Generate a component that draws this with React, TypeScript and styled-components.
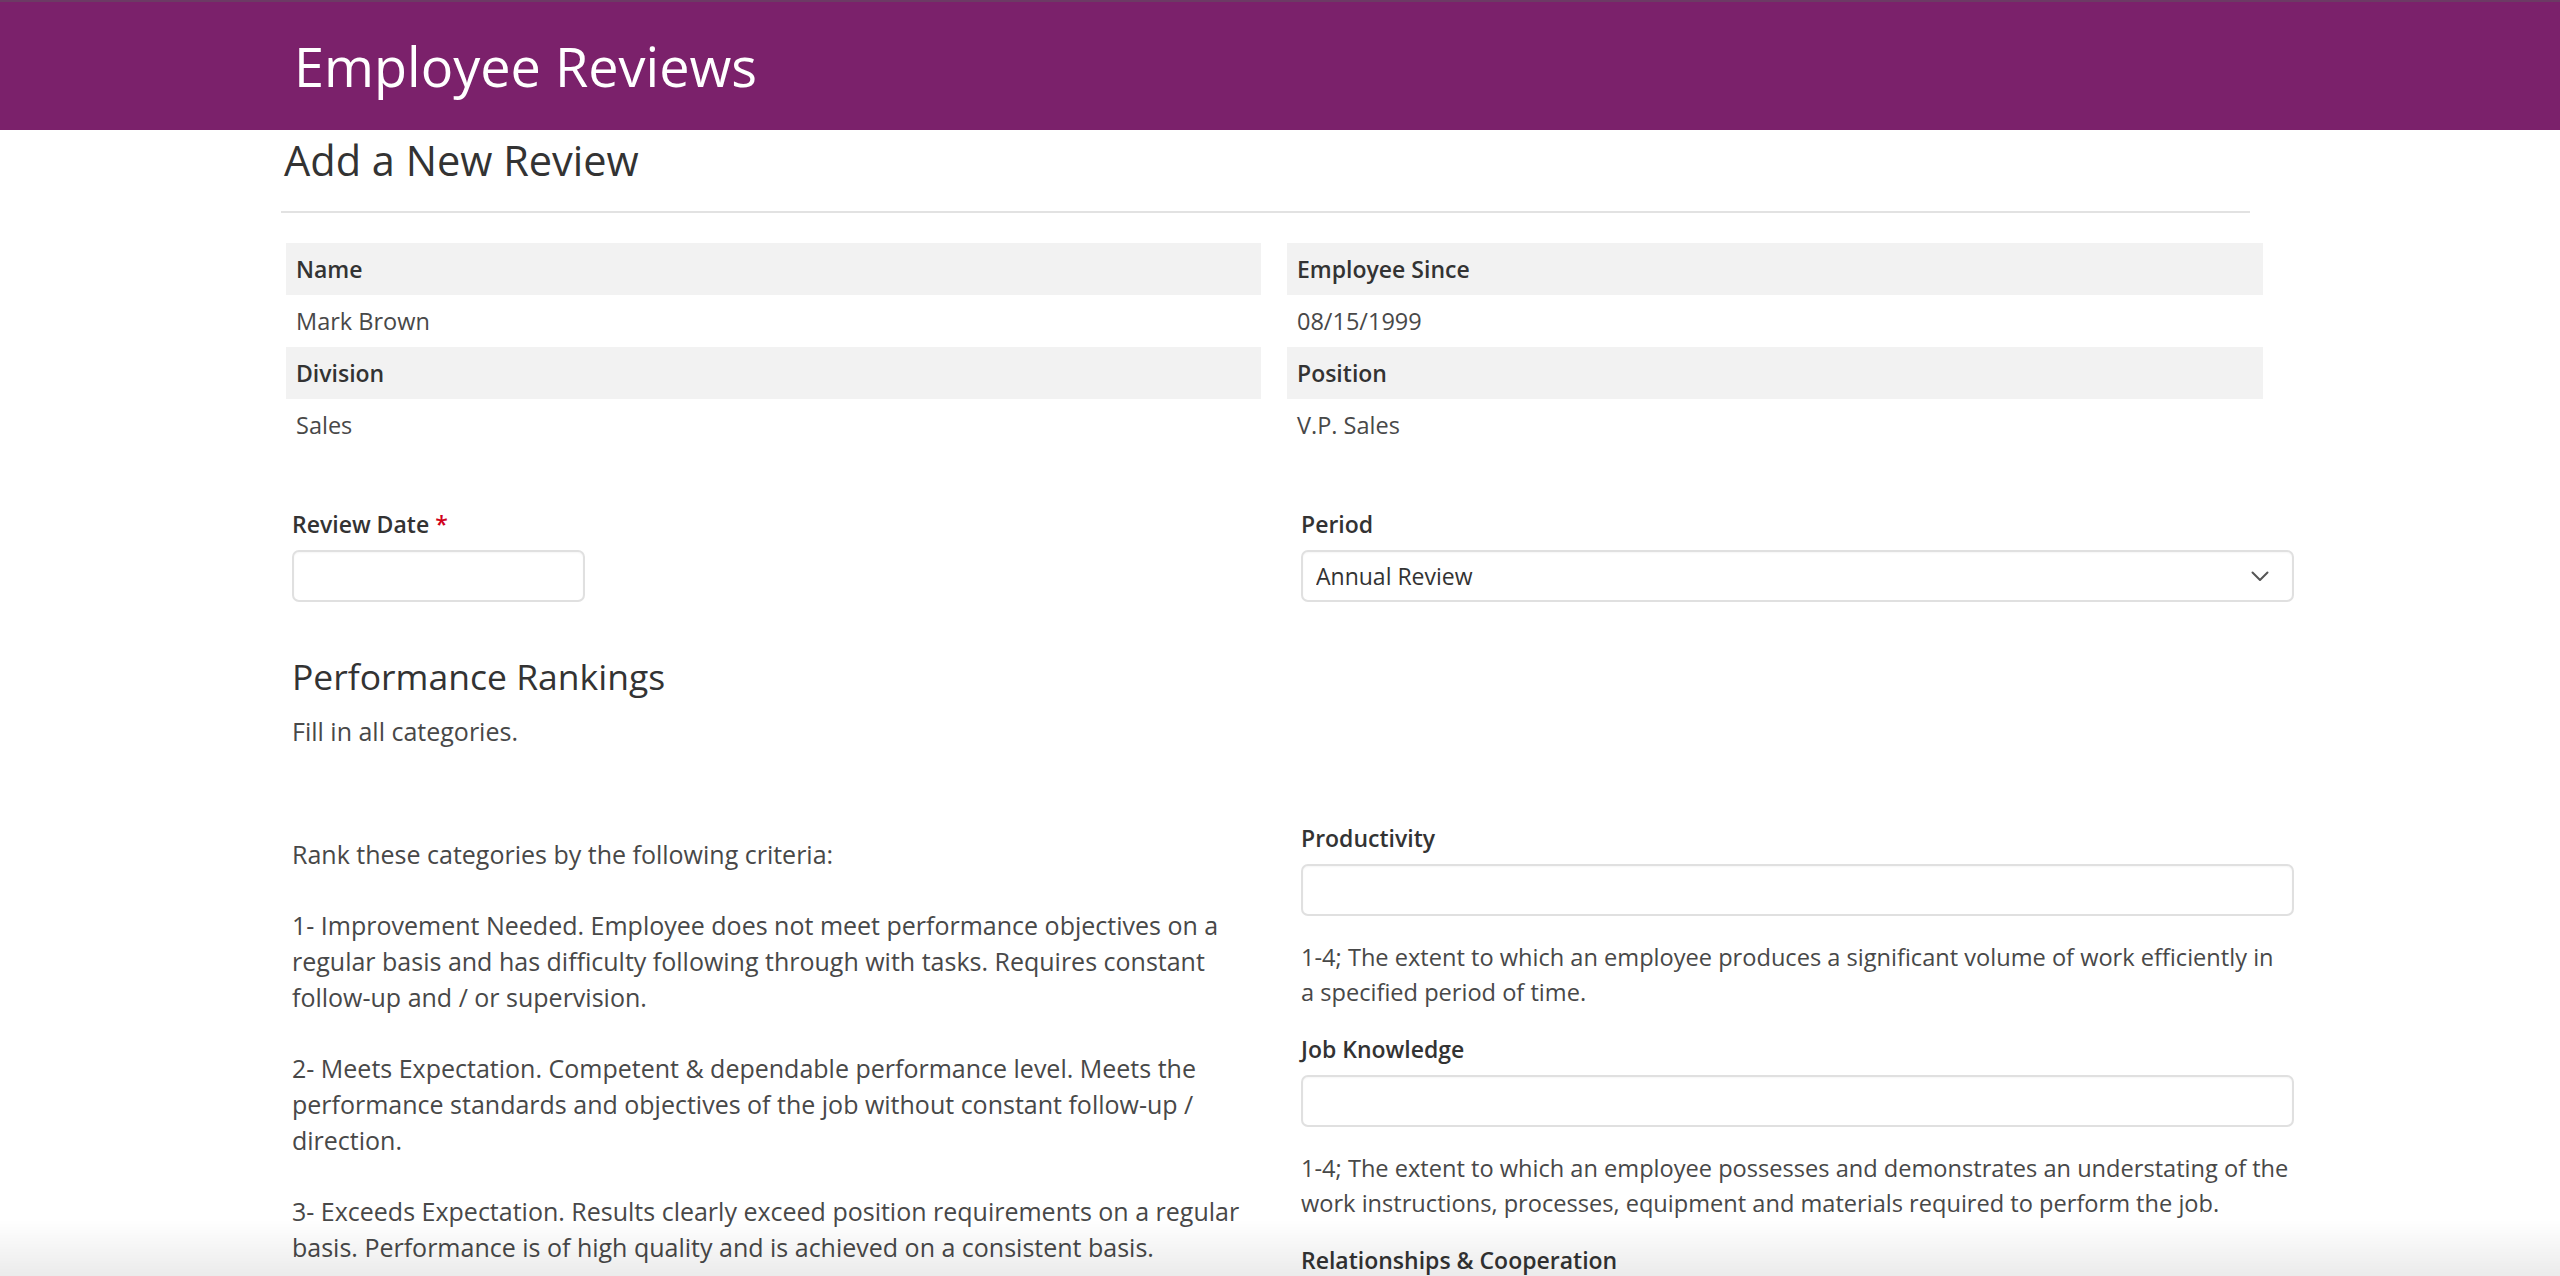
import styled, { createGlobalStyle } from "styled-components";

const GlobalStyle = createGlobalStyle`
  html, body {
    margin: 0;
    padding: 0;
    background: #ffffff;
    font-family: "Open Sans", "Noto Sans", sans-serif;
    color: #333333;
  }
  * {
    box-sizing: border-box;
  }
`;

type InfoItem = {
  label: string;
  value: string;
};

type Category = {
  label: string;
  help: string;
};

const info: InfoItem[] = [
  { label: "Name", value: "Mark Brown" },
  { label: "Employee Since", value: "08/15/1999" },
  { label: "Division", value: "Sales" },
  { label: "Position", value: "V.P. Sales" },
];

const criteria = [
  "Rank these categories by the following criteria:",
  "1- Improvement Needed. Employee does not meet performance objectives on a regular basis and has difficulty following through with tasks. Requires constant follow-up and / or supervision.",
  "2- Meets Expectation. Competent & dependable performance level. Meets the performance standards and objectives of the job without constant follow-up / direction.",
  "3- Exceeds Expectation. Results clearly exceed position requirements on a regular basis. Performance is of high quality and is achieved on a consistent basis.",
  "4- Outstanding. Performance consistently and significantly exceeds position requirements and expectations.",
];

const categories: Category[] = [
  {
    label: "Productivity",
    help: "1-4; The extent to which an employee produces a significant volume of work efficiently in a specified period of time.",
  },
  {
    label: "Job Knowledge",
    help: "1-4; The extent to which an employee possesses and demonstrates an understating of the work instructions, processes, equipment and materials required to perform the job.",
  },
  {
    label: "Relationships & Cooperation",
    help: "1-4; The extent to which an employee develops and maintains good working relationships with co-workers and customers.",
  },
];

export default function App() {
  return (
    <>
      <GlobalStyle />
      <TopBar>
        <AppTitle>Employee Reviews</AppTitle>
      </TopBar>
      <Page>
        <PageTitle>Add a New Review</PageTitle>
        <Divider />

        <InfoGrid>
          {info.map((item) => (
            <InfoCell key={item.label}>
              <InfoLabel>{item.label}</InfoLabel>
              <InfoValue>{item.value}</InfoValue>
            </InfoCell>
          ))}
        </InfoGrid>

        <Form>
          <TwoCols>
            <Field>
              <Label>
                Review Date <Required>*</Required>
              </Label>
              <DateInput type="text" />
            </Field>
            <Field>
              <Label>Period</Label>
              <SelectBox>
                <Select defaultValue="annual">
                  <option value="annual">Annual Review</option>
                  <option value="mid">Mid-Year Review</option>
                  <option value="probation">Probationary Review</option>
                </Select>
                <svg width="18" height="11" viewBox="0 0 18 11" fill="none">
                  <polyline
                    points="1.5,1.5 9,9 16.5,1.5"
                    stroke="#555"
                    strokeWidth="2"
                    strokeLinecap="round"
                    strokeLinejoin="round"
                  />
                </svg>
              </SelectBox>
            </Field>
          </TwoCols>

          <SectionTitle>Performance Rankings</SectionTitle>
          <Note>Fill in all categories.</Note>

          <RankingCols>
            <Criteria>
              {criteria.map((c) => (
                <p key={c}>{c}</p>
              ))}
            </Criteria>
            <Categories>
              {categories.map((cat) => (
                <Category key={cat.label}>
                  <Label>{cat.label}</Label>
                  <TextInput type="text" />
                  <Help>{cat.help}</Help>
                </Category>
              ))}
            </Categories>
          </RankingCols>
        </Form>
      </Page>
      <BottomShade />
    </>
  );
}

const TopBar = styled.header`
  height: 130px;
  background: #7b216b;
  box-shadow: inset 0 2px 0 #6c3a64;
  padding-left: 294px;
  padding-top: 2px;
  display: flex;
  align-items: center;
`;

const AppTitle = styled.h1`
  margin: 0;
  font-size: 54px;
  font-weight: 400;
  line-height: 1;
  color: #ffffff;
`;

const Page = styled.main`
  width: 2294px;
  padding-left: 284px;
  padding-bottom: 80px;
`;

const PageTitle = styled.h2`
  margin: 6px 0 0;
  font-size: 41.5px;
  line-height: 48px;
  font-weight: 400;
  color: #333333;
`;

const Divider = styled.hr`
  margin: 27px 0 0 -3px;
  width: 1969px;
  height: 2px;
  border: none;
  background: #e2e2e2;
`;

const InfoGrid = styled.div`
  margin: 30px 0 0 2px;
  width: 1977px;
  display: grid;
  grid-template-columns: 975px 976px;
  column-gap: 26px;
`;

const InfoCell = styled.div`
  display: flex;
  flex-direction: column;
`;

const InfoLabel = styled.div`
  height: 52px;
  padding: 0 10px;
  display: flex;
  align-items: center;
  background: #f2f2f2;
  font-size: 23px;
  font-weight: 600;
  color: #333333;
`;

const InfoValue = styled.div`
  height: 52px;
  padding: 0 10px;
  display: flex;
  align-items: center;
  font-size: 23.5px;
  color: #484848;
`;

const Form = styled.form`
  padding-left: 8px;
`;

const TwoCols = styled.div`
  margin-top: 55px;
  display: grid;
  grid-template-columns: 960px 993px;
  column-gap: 49px;
`;

const Field = styled.div`
  display: flex;
  flex-direction: column;
  align-items: flex-start;
`;

const Label = styled.label`
  display: block;
  font-size: 23px;
  line-height: 36px;
  font-weight: 600;
  color: #333333;
  margin-bottom: 8px;
`;

const Required = styled.span`
  color: #d0021b;
`;

const inputBase = `
  height: 52px;
  border: 2px solid #e0e0e0;
  border-radius: 7px;
  background: #ffffff;
  box-shadow: inset 0 1px 2px rgba(0, 0, 0, 0.04);
  font-family: "Open Sans", sans-serif;
  font-size: 23px;
  color: #333333;
  outline: none;
`;

const DateInput = styled.input`
  ${inputBase}
  width: 293px;
  padding: 0 14px;
`;

const TextInput = styled.input`
  ${inputBase}
  display: block;
  width: 100%;
  padding: 0 14px;
`;

const SelectBox = styled.div`
  ${inputBase}
  width: 100%;
  display: flex;
  align-items: center;
  padding: 0 23px 0 0;

  svg {
    flex: none;
  }
`;

const Select = styled.select`
  flex: 1;
  height: 100%;
  appearance: none;
  border: none;
  background: transparent;
  padding: 0 13px;
  font-family: "Open Sans", sans-serif;
  font-size: 23px;
  color: #333333;
  outline: none;
`;

const SectionTitle = styled.h3`
  margin: 53px 0 0;
  font-size: 35.5px;
  line-height: 42px;
  font-weight: 400;
  color: #333333;
`;

const Note = styled.p`
  margin: 16px 0 0;
  font-size: 25px;
  line-height: 36px;
  color: #484848;
`;

const RankingCols = styled.div`
  margin-top: 71px;
  display: grid;
  grid-template-columns: 960px 993px;
  column-gap: 49px;
  align-items: start;
`;

const Criteria = styled.div`
  padding-top: 17px;
  font-size: 25px;
  line-height: 35.7px;
  color: #484848;

  p {
    margin: 0 0 35.7px;
  }
`;

const Categories = styled.div`
  display: flex;
  flex-direction: column;
  gap: 21px;
`;

const Category = styled.div`
  display: flex;
  flex-direction: column;
`;

const Help = styled.p`
  margin: 24px 0 0;
  padding-right: 4px;
  font-size: 23.6px;
  line-height: 35px;
  color: #484848;
`;

const BottomShade = styled.div`
  position: fixed;
  left: 0;
  right: 0;
  bottom: 0;
  height: 56px;
  pointer-events: none;
  background: linear-gradient(to bottom, rgba(0, 0, 0, 0), rgba(0, 0, 0, 0.08));
`;
